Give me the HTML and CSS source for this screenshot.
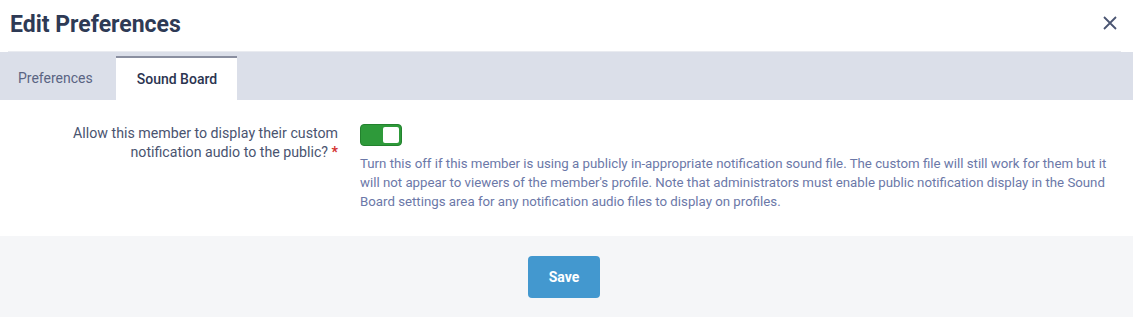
FILE: index.html
```html
<!DOCTYPE html>
<html lang="en">
<head>
    <meta charset="UTF-8">
    <meta name="viewport" content="width=device-width, initial-scale=1.0">
    <title>Edit Preferences</title>
    <link rel="stylesheet" href="styles.css">
</head>
<body>

    <div class="modal">
        <div class="modal-header">
            <h2>Edit Preferences</h2>
            <button class="close-btn" aria-label="Close">
                <svg width="16" height="16" viewBox="0 0 16 16">
                    <path d="M2 2 L14 14 M14 2 L2 14" stroke="#4a5572" stroke-width="1.8" fill="none"/>
                </svg>
            </button>
        </div>

        <!-- Tabs -->
        <div class="tabs">
            <div class="tab">Preferences</div>
            <div class="tab active">Sound Board</div>
        </div>

        <div class="modal-body">
            <div class="form-row">
                <label class="form-label">Allow this member to display their custom notification audio to the public?&nbsp;<span class="required">*</span></label>
                <div class="form-field">
                    <label class="toggle">
                        <input type="checkbox" checked>
                        <span class="knob"></span>
                    </label>
                    <p class="help-text">Turn this off if this member is using a publicly in-appropriate notification sound file. The custom file will still work for them but it will not appear to viewers of the member's profile. Note that administrators must enable public notification display in the Sound Board settings area for any notification audio files to display on profiles.</p>
                </div>
            </div>
        </div>

        <!-- Save button -->
        <div class="modal-footer">
            <button class="save-btn">Save</button>
        </div>
    </div>

</body>
</html>
```

FILE: styles.css
```css
/* Basic Reset */
* {
    margin: 0;
    padding: 0;
    box-sizing: border-box;
}

body {
    font-family: Roboto, 'Liberation Sans', sans-serif;
    background-color: #fff;
    color: #333;
}

.modal {
    width: 1133px;
    height: 317px;
    display: flex;
    flex-direction: column;
}

.modal-header {
    height: 52px;
    margin: 0 12px 0 8px;
    padding-left: 2px;
    display: flex;
    align-items: center;
    justify-content: space-between;
    border-bottom: 1px solid #e9ebf0;
}

.modal-header h2 {
    font-size: 23px;
    font-weight: 700;
    color: #2e3a55;
    margin-top: -2px;
}

.close-btn {
    background: none;
    border: none;
    width: 20px;
    height: 20px;
    display: flex;
    align-items: center;
    justify-content: center;
    margin-right: 1px;
    margin-top: -6px;
    cursor: pointer;
}

.tabs {
    height: 48px;
    background-color: #dbdfe9;
    display: flex;
    align-items: flex-end;
}

.tab {
    height: 44px;
    padding: 0 23px 0 18px;
    display: flex;
    align-items: center;
    font-size: 14px;
    color: #5a6483;
    cursor: pointer;
}

.tab.active {
    background-color: #fff;
    border-top: 2px solid #8a8fa0;
    padding: 0 20px 0 21px;
    color: #2b3450;
    font-weight: 500;
}

.modal-body {
    padding: 24px 20px 25px 0;
}

.form-row {
    display: grid;
    grid-template-columns: 338px 1fr;
    column-gap: 22px;
}

.form-label {
    text-align: right;
    font-size: 14.2px;
    line-height: 19px;
    color: #4a5470;
    padding-left: 60px;
}

.required {
    color: #d32f2f;
    font-weight: 700;
}

.toggle {
    display: block;
    position: relative;
    width: 42px;
    height: 22px;
    background-color: #2e9a3a;
    border: 1px solid #23822e;
    border-radius: 4px;
    cursor: pointer;
}

.toggle input {
    display: none;
}

.toggle .knob {
    position: absolute;
    top: 2px;
    right: 2px;
    width: 16px;
    height: 16px;
    background-color: #fff;
    border-radius: 2px;
}

.help-text {
    margin-top: 8px;
    font-size: 13.25px;
    line-height: 19px;
    color: #6b78a8;
}

.modal-footer {
    flex: 1;
    background-color: #f5f6f8;
    display: flex;
    justify-content: center;
    align-items: flex-start;
    padding: 20px 5px 0 0;
}

.save-btn {
    width: 72px;
    height: 42px;
    background-color: #4398cf;
    color: #fff;
    border: none;
    border-radius: 4px;
    font-family: Roboto, 'Liberation Sans', sans-serif;
    font-size: 14px;
    font-weight: 700;
    cursor: pointer;
}
```
